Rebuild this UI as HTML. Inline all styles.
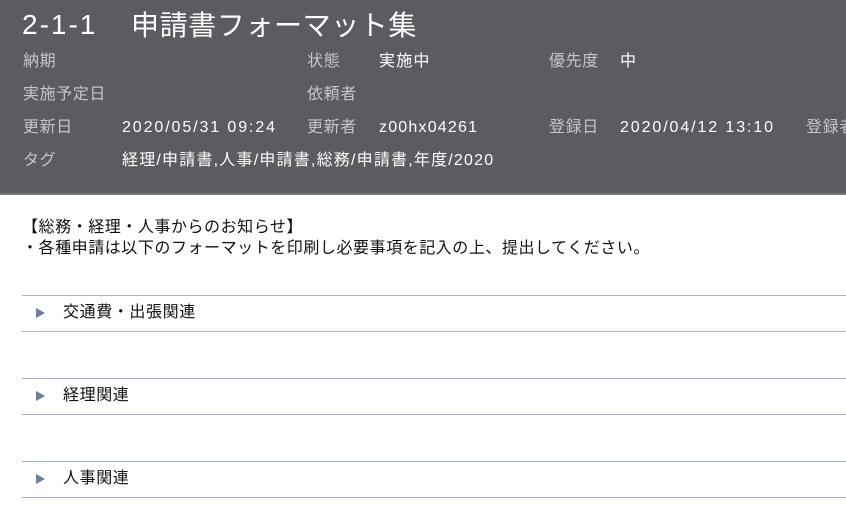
<!DOCTYPE html>
<html><head><meta charset="utf-8"><style>
body{margin:0;width:846px;height:510px;overflow:hidden;background:#fff;font-family:"Liberation Sans","Noto Sans CJK JP",sans-serif;}
.hd{position:absolute;left:0;top:0;width:846px;height:193px;background:#5b5c62;border-bottom:2px solid #77787d;}
.t{position:absolute;top:5px;font-size:28px;color:#fff;white-space:nowrap;letter-spacing:0.5px}
.l,.v{position:absolute;font-size:16px;white-space:nowrap;line-height:20px;letter-spacing:0.6px}
.l{color:#c4c5c8}.v{color:#fff;letter-spacing:1.2px}
.d{letter-spacing:1.9px}
.note{position:absolute;left:22px;top:217px;font-size:16px;line-height:21px;color:#111;white-space:nowrap;letter-spacing:0.55px}
.ln{position:absolute;left:22px;right:0;height:1px;background:#a8b3d3}
.it{position:absolute;left:63px;font-size:16px;color:#111;line-height:20px;letter-spacing:0.6px}
.tri{position:absolute;left:36px;width:0;height:0;border-left:9px solid #6f7b9a;border-top:5px solid transparent;border-bottom:5px solid transparent}
</style></head><body>
<div class="hd">
<div class="t" style="left:22px;top:9px;letter-spacing:2px">2-1-1</div>
<div class="t" style="left:131px;top:4px;letter-spacing:0.6px">申請書フォーマット集</div>
<div class="l" style="left:23px;top:52px">納期</div>
<div class="l" style="left:307px;top:52px">状態</div><div class="v" style="left:379px;top:52px">実施中</div>
<div class="l" style="left:549px;top:52px">優先度</div><div class="v" style="left:620px;top:52px">中</div>
<div class="l" style="left:23px;top:85px">実施予定日</div>
<div class="l" style="left:307px;top:85px">依頼者</div>
<div class="l" style="left:23px;top:118px">更新日</div><div class="v d" style="left:122px;top:118px">2020/05/31 09:24</div>
<div class="l" style="left:307px;top:118px">更新者</div><div class="v" style="left:379px;top:118px">z00hx04261</div>
<div class="l" style="left:549px;top:118px">登録日</div><div class="v d" style="left:620px;top:118px">2020/04/12 13:10</div>
<div class="l" style="left:806px;top:118px">登録者</div>
<div class="l" style="left:23px;top:151px">タグ</div><div class="v" style="left:122px;top:151px">経理/申請書,人事/申請書,総務/申請書,年度/2020</div>
</div>
<div class="note">【総務・経理・人事からのお知らせ】<br>・各種申請は以下のフォーマットを印刷し必要事項を記入の上、提出してください。</div>
<div class="ln" style="top:295px"></div><div class="tri" style="top:308px"></div><div class="it" style="top:303px">交通費・出張関連</div><div class="ln" style="top:331px"></div>
<div class="ln" style="top:378px"></div><div class="tri" style="top:391px"></div><div class="it" style="top:386px">経理関連</div><div class="ln" style="top:414px"></div>
<div class="ln" style="top:461px"></div><div class="tri" style="top:474px"></div><div class="it" style="top:469px">人事関連</div><div class="ln" style="top:497px"></div>
</body></html>
